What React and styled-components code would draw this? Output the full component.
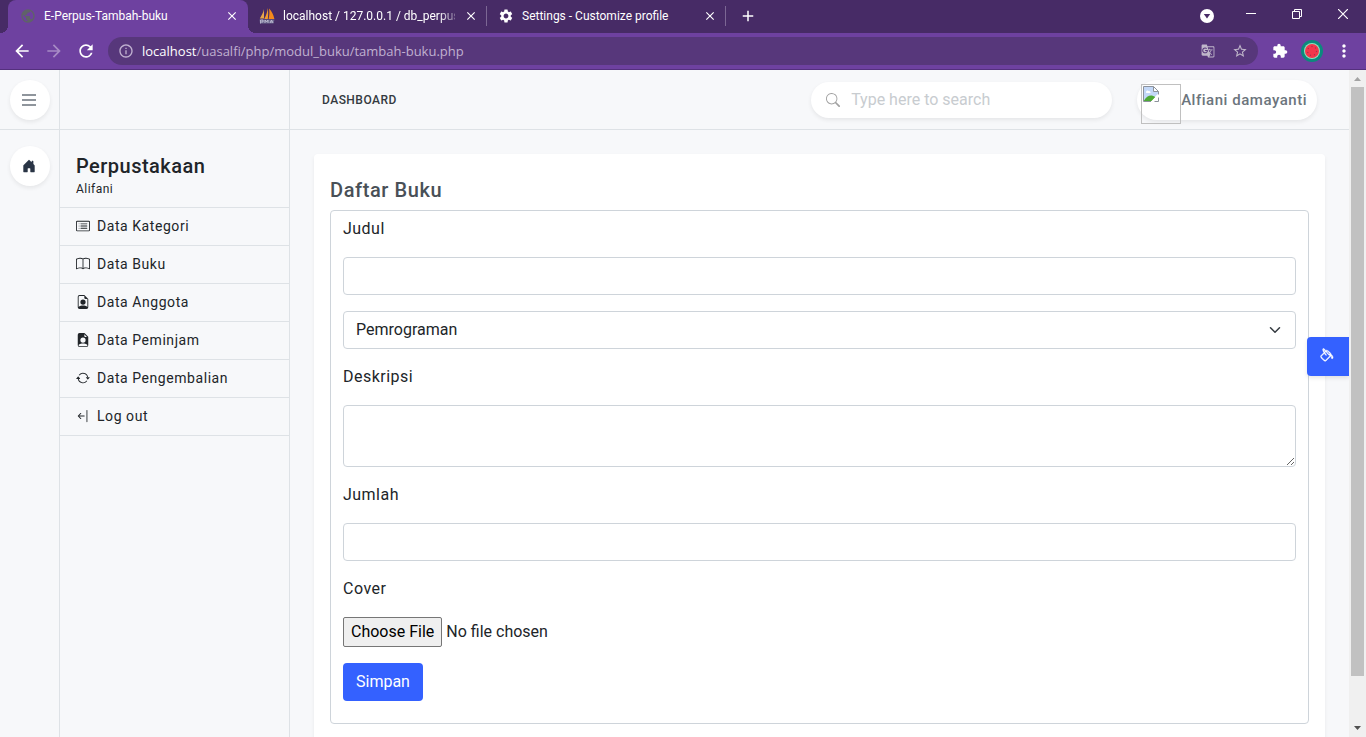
import React from "react";
import styled, { createGlobalStyle } from "styled-components";
import {
  BsCardList,
  BsBook,
  BsFileEarmarkPerson,
  BsFileEarmarkPersonFill,
  BsArrowRepeat,
  BsArrowBarLeft,
  BsHouseDoorFill,
  BsSearch,
  BsPaintBucket,
} from "react-icons/bs";
import {
  MdGTranslate,
  MdStarBorder,
  MdExtension,
  MdMoreVert,
  MdArrowBack,
  MdArrowForward,
  MdRefresh,
  MdInfoOutline,
  MdPublic,
  MdSettings,
  MdAdd,
  MdClose,
} from "react-icons/md";

const GlobalStyle = createGlobalStyle`
  *, *::before, *::after { box-sizing: border-box; }
  body {
    margin: 0;
    background: #f7f8fa;
    color: #212529;
    font-family: Roboto, "Liberation Sans", sans-serif;
    font-size: 16px;
    line-height: 24px;
  }
  button, input, select, textarea { font: inherit; color: inherit; margin: 0; }
  svg { display: block; flex: none; }
`;

const Browser = styled.div`
  display: flex;
  flex-direction: column;
  height: 100vh;
  overflow: hidden;
`;

/* Browser window */

const TabStrip = styled.div`
  display: flex;
  height: 33px;
  padding-left: 8px;
  background: #472b66;
  color: #fff;
  font-size: 12px;
`;

const Tab = styled.div`
  position: relative;
  display: flex;
  align-items: center;
  gap: 8px;
  width: ${(p) => (p.$active ? 240 : 239)}px;
  height: 33px;
  padding: 0 8px 2px ${(p) => (p.$active ? 12 : 11)}px;
  border-radius: 8px 8px 0 0;
  background: ${(p) => (p.$active ? "#6e41a0" : "transparent")};

  &::before,
  &::after {
    content: "";
    display: ${(p) => (p.$active ? "block" : "none")};
    position: absolute;
    bottom: 0;
    width: 8px;
    height: 8px;
  }
  &::before {
    left: -8px;
    background: radial-gradient(circle at 0 0, transparent 8px, #6e41a0 8px);
  }
  &::after {
    right: -8px;
    background: radial-gradient(circle at 100% 0, transparent 8px, #6e41a0 8px);
  }
`;

const TabTitle = styled.span`
  flex: 1;
  min-width: 0;
  white-space: nowrap;
  mask-image: ${(p) =>
    p.$fade ? "linear-gradient(to right, #000 calc(100% - 16px), rgba(0, 0, 0, 0.3))" : "none"};
  mask-clip: no-clip;
`;

const TabDivider = styled.span`
  align-self: flex-start;
  width: 1px;
  height: 20px;
  margin: 6px 0 0 -1px;
  background: #7c6794;
`;

const PlainButton = styled.button`
  display: flex;
  align-items: center;
  justify-content: center;
  width: ${(p) => p.$w || 32}px;
  height: ${(p) => p.$h || 32}px;
  padding: 0;
  border: 0;
  background: none;
  color: ${(p) => p.$color || "#fff"};
`;

const WindowControls = styled.div`
  display: flex;
  margin-left: auto;
`;

const Toolbar = styled.div`
  display: flex;
  align-items: center;
  height: 37px;
  padding: 0 6px;
  background: #6e41a0;
  border-bottom: 1px solid #54307d;
`;

const AddressBar = styled.div`
  display: flex;
  align-items: center;
  flex: 1;
  min-width: 0;
  height: 28px;
  margin: 0 6px;
  padding: 0 2px 0 10px;
  border-radius: 14px;
  background: #57377b;
  color: #c0b1d0;
`;

const Url = styled.span`
  flex: 1;
  padding-left: 8px;
  overflow: hidden;
  white-space: nowrap;
  font-family: "Open Sans", "Noto Sans", sans-serif;
  font-size: 13px;

  b {
    color: #fff;
    font-weight: 400;
  }
`;

const Viewport = styled.div`
  position: relative;
  display: flex;
  flex: 1;
  min-height: 0;
`;

const Scrollbar = styled.div`
  display: flex;
  flex-direction: column;
  width: 17px;
  padding: 0 2px;
  background: #f0f0f0;
`;

const ScrollArrow = styled.svg`
  width: 13px;
  height: 17px;
  fill: ${(p) => p.$color};
`;

const ScrollThumb = styled.div`
  height: 93%;
  background: #c1c1c1;
`;

const ScrollTrack = styled.div`
  flex: 1;
`;

/* Page */

const Page = styled.div`
  position: relative;
  display: flex;
  flex-direction: column;
  flex: 1;
  min-width: 0;
  overflow: hidden;
`;

const TopBar = styled.header`
  display: flex;
  height: 60px;
  flex: none;
  border-bottom: 1px solid #dee2e6;
`;

const RailCell = styled.div`
  display: flex;
  justify-content: center;
  align-items: flex-start;
  width: 60px;
  flex: none;
  padding-top: ${(p) => p.$top}px;
  border-right: 1px solid #dee2e6;
`;

const PanelCell = styled.div`
  width: 230px;
  flex: none;
  border-right: 1px solid #dee2e6;
`;

const RoundButton = styled.button`
  display: flex;
  align-items: center;
  justify-content: center;
  width: 40px;
  height: 40px;
  padding: 0 2px 0 0;
  border: 0;
  border-radius: 50%;
  background: #fff;
  color: ${(p) => p.$color};
  box-shadow: 0 2px 4px rgba(0, 0, 0, 0.075);
`;

const TopContent = styled.div`
  display: flex;
  align-items: center;
  flex: 1;
  min-width: 0;
  padding: 0 32px;
`;

const Crumb = styled.span`
  font-size: 12px;
  font-weight: 500;
  letter-spacing: 0.04em;
  color: #343a40;
`;

const SearchBox = styled.label`
  display: flex;
  align-items: center;
  gap: 11px;
  width: 301px;
  height: 36px;
  margin-left: auto;
  padding: 0 15px;
  border-radius: 18px;
  background: #fff;
  color: #a2a2a2;
  box-shadow: 0 2px 4px rgba(0, 0, 0, 0.075);
`;

const SearchInput = styled.input`
  flex: 1;
  min-width: 0;
  padding: 0;
  border: 0;
  outline: 0;
  background: none;

  &::placeholder {
    color: #c8ccd0;
    opacity: 1;
  }
`;

const UserPill = styled.a`
  display: flex;
  align-items: center;
  height: 40px;
  margin-left: 25px;
  padding: 0 10px 0 4px;
  border-radius: 20px;
  background: #fff;
  color: #6c757d;
  font-size: 15px;
  font-weight: 500;
  letter-spacing: 0.035em;
  text-decoration: none;
  white-space: nowrap;
  box-shadow: 0 2px 4px rgba(0, 0, 0, 0.075);
`;

const MissingPicture = styled.span`
  align-self: flex-start;
  width: 40px;
  height: 40px;
  margin-top: 4px;
  padding: 1px;
  border: 1px solid #c0c0c0;
`;

const Body = styled.div`
  display: flex;
  flex: 1;
  min-height: 0;
`;

const SideHead = styled.div`
  padding: 24px 16px 6px;
  border-bottom: 1px solid #dee2e6;
  letter-spacing: 0.03em;
`;

const SideTitle = styled.h1`
  margin: 0;
  font-size: 20px;
  font-weight: 500;
  line-height: 24px;
`;

const SideSub = styled.p`
  margin: 0;
  font-size: 12px;
  letter-spacing: 0.04em;
  line-height: 23px;
`;

const SideLink = styled.a`
  display: flex;
  align-items: center;
  gap: 7px;
  height: 38px;
  padding: 0 16px 1px;
  border-bottom: 1px solid #dee2e6;
  color: inherit;
  font-size: 14px;
  letter-spacing: 0.04em;
  text-decoration: none;
`;

const Main = styled.main`
  flex: 1;
  min-width: 0;
  padding: 24px;
`;

const Card = styled.section`
  min-height: 100%;
  padding: 24px 16px 16px;
  border-radius: 4px;
  background: #fff;
  box-shadow: 0 2px 4px rgba(0, 0, 0, 0.06);
`;

const CardTitle = styled.h2`
  margin: 0 0 8px;
  color: #495057;
  font-size: 20px;
  font-weight: 500;
  letter-spacing: 0.03em;
  line-height: 24px;
`;

const Form = styled.form`
  display: flex;
  flex-direction: column;
  align-items: flex-start;
  gap: 16px;
  padding: 6px 12px 22px;
  border: 1px solid #ced4da;
  border-radius: 4px;
`;

const Label = styled.label`
  letter-spacing: 0.03em;
`;

const Input = styled.input`
  width: 100%;
  height: 38px;
  padding: 6px 12px;
  border: 1px solid #ced4da;
  border-radius: 4px;
  background: #fff;
`;

const TextArea = styled.textarea`
  display: block;
  width: 100%;
  height: 62px;
  padding: 6px 12px;
  border: 1px solid #ced4da;
  border-radius: 4px;
  background: #fff;
  resize: vertical;
`;

const SelectWrap = styled.div`
  display: grid;
  width: 100%;
  align-items: center;

  > * {
    grid-area: 1 / 1;
  }
  > svg {
    justify-self: end;
    margin-right: 13px;
    pointer-events: none;
  }
`;

const Select = styled.select`
  appearance: none;
  width: 100%;
  height: 38px;
  padding: 0 36px 0 12px;
  border: 1px solid #ced4da;
  border-radius: 4px;
  background: #fff;
`;

const FileInput = styled.input`
  height: 30px;
  line-height: 24px;

  &::file-selector-button {
    height: 30px;
    margin: 0 4px 0 0;
    padding: 1px 7px;
    border: 1px solid #767676;
    border-radius: 2px;
    background: #efefef;
    color: #000;
    font: inherit;
  }
`;

const SubmitButton = styled.button`
  height: 38px;
  padding: 0 13px;
  border: 0;
  border-radius: 4px;
  background: #3461ff;
  color: #fff;
`;

const ThemeButton = styled.button`
  position: absolute;
  top: 40%;
  right: 0;
  display: flex;
  align-items: center;
  justify-content: center;
  width: 42px;
  height: 39px;
  padding: 0 1px 1px 0;
  border: 0;
  border-radius: 4px 0 0 4px;
  background: #3461ff;
  color: #fff;
  box-shadow: 0 2px 4px rgba(0, 0, 0, 0.1);
`;

/* Drawings */

const SailsIcon = () => (
  <svg width="16" height="16" viewBox="0 0 16 16" aria-hidden="true">
    <path d="M5 1 L5 10.500 L0.800 10.500 C2.800 7 4.400 4.500 5 1Z" fill="#e8a64a" />
    <path d="M8.800 0 C9.300 4 9.300 7 8.800 11 L5.300 11 C7.200 7 8.400 4 8.800 0Z" fill="#f39a2b" />
    <path d="M10 0.500 C12.500 3 14.500 6.500 15.400 11 L9.600 11 C10.600 6.500 10.500 3.500 10 0.500Z" fill="#f48a1c" />
    <path d="M0.500 11.500 H15.500 L14.500 15.500 H1Z" fill="#6a668c" />
    <path d="M1.500 15.500 V12 H4 V14 H2 M6 15 V12 L7.500 14 L9 12 V15 M11 15 L12.500 12 L14 15 M11.500 14 H13.500" fill="none" stroke="#c9c7dc" strokeWidth="0.800" />
  </svg>
);

const TabSearchIcon = () => (
  <svg width="14" height="14" viewBox="0 0 14 14" aria-hidden="true">
    <circle cx="7" cy="7" r="7" fill="#fff" />
    <path d="M3.800 5 H10.200 L7 9.400Z" fill="#472b66" />
  </svg>
);

const MinimizeIcon = () => (
  <svg width="10" height="10" viewBox="0 0 10 10" aria-hidden="true">
    <path d="M0 4.500 H10" stroke="#fff" />
  </svg>
);

const RestoreIcon = () => (
  <svg width="10" height="10" viewBox="0 0 10 10" fill="none" stroke="#fff" aria-hidden="true">
    <path d="M0.500 2.500 H7.500 V9.500 H0.500Z M2.500 2.500 V0.500 H9.500 V7.500 H7.500" />
  </svg>
);

const CloseWindowIcon = () => (
  <svg width="10" height="10" viewBox="0 0 10 10" stroke="#fff" aria-hidden="true">
    <path d="M0 0 L10 10 M10 0 L0 10" strokeWidth="1.200" />
  </svg>
);

const MelonAvatar = () => (
  <svg width="22" height="22" viewBox="0 0 22 22" aria-hidden="true">
    <circle cx="11" cy="11" r="11" fill="#0b8a7d" />
    <circle cx="11" cy="11" r="8" fill="#8fe3c0" />
    <circle cx="11" cy="11" r="7" fill="#f4364c" />
    <g fill="#a8324a">
      <circle cx="11" cy="6.500" r="0.700" />
      <circle cx="14.500" cy="8" r="0.700" />
      <circle cx="15.500" cy="11.500" r="0.700" />
      <circle cx="13.500" cy="14.800" r="0.700" />
      <circle cx="9.500" cy="15.200" r="0.700" />
      <circle cx="6.800" cy="12.500" r="0.700" />
      <circle cx="7.300" cy="8.500" r="0.700" />
    </g>
  </svg>
);

const MenuIcon = () => (
  <svg width="14" height="12" viewBox="0 0 14 12" fill="currentColor" aria-hidden="true">
    <rect y="0" width="14" height="2" />
    <rect y="5" width="14" height="2" />
    <rect y="10" width="14" height="2" />
  </svg>
);

const BrokenImageIcon = () => (
  <svg width="16" height="16" viewBox="0 0 16 16" aria-hidden="true">
    <path d="M0.500 0.500 H10.500 L15.500 5.500 V15.500 H0.500Z" fill="#fff" />
    <path d="M1 1 H10.500 V5.500 H15 V8 L7 15 H1Z" fill="#c3d8f8" />
    <path d="M3 6 C3 4.500 5 4 5.600 5 C7 4.600 8 6 7.400 7 H3.200Z" fill="#fff" />
    <path d="M1 14.500 C3 11 6 9 9 9.500 L12.500 11 L9 15 H1Z" fill="#4eaa35" />
    <path d="M16 7.500 L7.500 16 H10 L16 10Z" fill="#fff" />
    <path d="M8 15.500 H0.500 V0.500 H10.500 L15.500 5.500 V8.500 M10.500 0.500 V5.500 H15.500 M15.500 11.500 V15.500 H11.500" fill="none" stroke="#8c929b" />
  </svg>
);

const ChevronIcon = () => (
  <svg width="16" height="12" viewBox="0 0 16 16" aria-hidden="true">
    <path d="M2 5l6 6 6-6" fill="none" stroke="#343a40" strokeWidth="2" strokeLinecap="round" strokeLinejoin="round" />
  </svg>
);

const tabs = [
  { title: "E-Perpus-Tambah-buku", icon: <MdPublic size={16} color="#5f6368" />, active: true },
  { title: "localhost / 127.0.0.1 / db_perpus", icon: <SailsIcon />, fade: true },
  { title: "Settings - Customize profile", icon: <MdSettings size={16} /> },
];

const links = [
  { label: "Data Kategori", Icon: BsCardList },
  { label: "Data Buku", Icon: BsBook },
  { label: "Data Anggota", Icon: BsFileEarmarkPerson },
  { label: "Data Peminjam", Icon: BsFileEarmarkPersonFill },
  { label: "Data Pengembalian", Icon: BsArrowRepeat },
  { label: "Log out", Icon: BsArrowBarLeft },
];

function BrowserChrome() {
  return (
    <>
      <TabStrip>
        {tabs.map((t) => (
          <React.Fragment key={t.title}>
            <Tab $active={t.active}>
              {t.icon}
              <TabTitle $fade={t.fade}>{t.title}</TabTitle>
              <PlainButton $w={16} $h={16} aria-label="Close tab">
                <MdClose size={14} />
              </PlainButton>
            </Tab>
            {!t.active && <TabDivider />}
          </React.Fragment>
        ))}
        <PlainButton $w={44} aria-label="New tab">
          <MdAdd size={18} />
        </PlainButton>
        <WindowControls>
          <PlainButton $w={42} aria-label="Search tabs">
            <TabSearchIcon />
          </PlainButton>
          <PlainButton $w={46} $h={27} aria-label="Minimize">
            <MinimizeIcon />
          </PlainButton>
          <PlainButton $w={46} $h={27} aria-label="Restore">
            <RestoreIcon />
          </PlainButton>
          <PlainButton $w={46} $h={27} aria-label="Close window">
            <CloseWindowIcon />
          </PlainButton>
        </WindowControls>
      </TabStrip>
      <Toolbar>
        <PlainButton aria-label="Back">
          <MdArrowBack size={20} />
        </PlainButton>
        <PlainButton $color="#a78bc5" aria-label="Forward">
          <MdArrowForward size={20} />
        </PlainButton>
        <PlainButton aria-label="Reload">
          <MdRefresh size={20} />
        </PlainButton>
        <AddressBar>
          <MdInfoOutline size={16} />
          <Url>
            <b>localhost</b>/uasalfi/php/modul_buku/tambah-buku.php
          </Url>
          <PlainButton $color="#c0b7ca" aria-label="Translate">
            <MdGTranslate size={14} />
          </PlainButton>
          <PlainButton $color="#c0b7ca" aria-label="Bookmark">
            <MdStarBorder size={16} />
          </PlainButton>
        </AddressBar>
        <PlainButton aria-label="Extensions">
          <MdExtension size={16} />
        </PlainButton>
        <PlainButton aria-label="Profile">
          <MelonAvatar />
        </PlainButton>
        <PlainButton aria-label="Menu">
          <MdMoreVert size={20} />
        </PlainButton>
      </Toolbar>
    </>
  );
}

function BookForm() {
  return (
    <Form onSubmit={(e) => e.preventDefault()}>
      <Label htmlFor="judul">Judul</Label>
      <Input id="judul" type="text" />
      <SelectWrap>
        <Select aria-label="Kategori" defaultValue="Pemrograman">
          <option>Pemrograman</option>
        </Select>
        <ChevronIcon />
      </SelectWrap>
      <Label htmlFor="deskripsi">Deskripsi</Label>
      <TextArea id="deskripsi" />
      <Label htmlFor="jumlah">Jumlah</Label>
      <Input id="jumlah" type="text" />
      <Label htmlFor="cover">Cover</Label>
      <FileInput id="cover" type="file" />
      <SubmitButton type="submit">Simpan</SubmitButton>
    </Form>
  );
}

export default function App() {
  return (
    <Browser>
      <GlobalStyle />
      <BrowserChrome />
      <Viewport>
        <Page>
          <TopBar>
            <RailCell $top={10}>
              <RoundButton $color="#8f959c" aria-label="Toggle menu">
                <MenuIcon />
              </RoundButton>
            </RailCell>
            <PanelCell />
            <TopContent>
              <Crumb>DASHBOARD</Crumb>
              <SearchBox>
                <BsSearch size={14} />
                <SearchInput type="text" placeholder="Type here to search" aria-label="Search" />
              </SearchBox>
              <UserPill href="#profile">
                <MissingPicture>
                  <BrokenImageIcon />
                </MissingPicture>
                Alfiani damayanti
              </UserPill>
            </TopContent>
          </TopBar>
          <Body>
            <RailCell $top={16}>
              <RoundButton $color="#293445" aria-label="Home">
                <BsHouseDoorFill size={14} />
              </RoundButton>
            </RailCell>
            <PanelCell as="nav">
              <SideHead>
                <SideTitle>Perpustakaan</SideTitle>
                <SideSub>Alifani</SideSub>
              </SideHead>
              {links.map(({ label, Icon }) => (
                <SideLink key={label} href="#menu">
                  <Icon size={14} />
                  {label}
                </SideLink>
              ))}
            </PanelCell>
            <Main>
              <Card>
                <CardTitle>Daftar Buku</CardTitle>
                <BookForm />
              </Card>
            </Main>
          </Body>
          <ThemeButton aria-label="Theme">
            <BsPaintBucket size={15} stroke="currentColor" strokeWidth="0.4" />
          </ThemeButton>
        </Page>
        <Scrollbar>
          <ScrollArrow viewBox="0 0 13 17" $color="#a3a3a3">
            <path d="M3 11 L6.500 7 L10 11Z" />
          </ScrollArrow>
          <ScrollTrack>
            <ScrollThumb />
          </ScrollTrack>
          <ScrollArrow viewBox="0 0 13 17" $color="#505050">
            <path d="M3 6 L6.500 10 L10 6Z" />
          </ScrollArrow>
        </Scrollbar>
      </Viewport>
    </Browser>
  );
}
